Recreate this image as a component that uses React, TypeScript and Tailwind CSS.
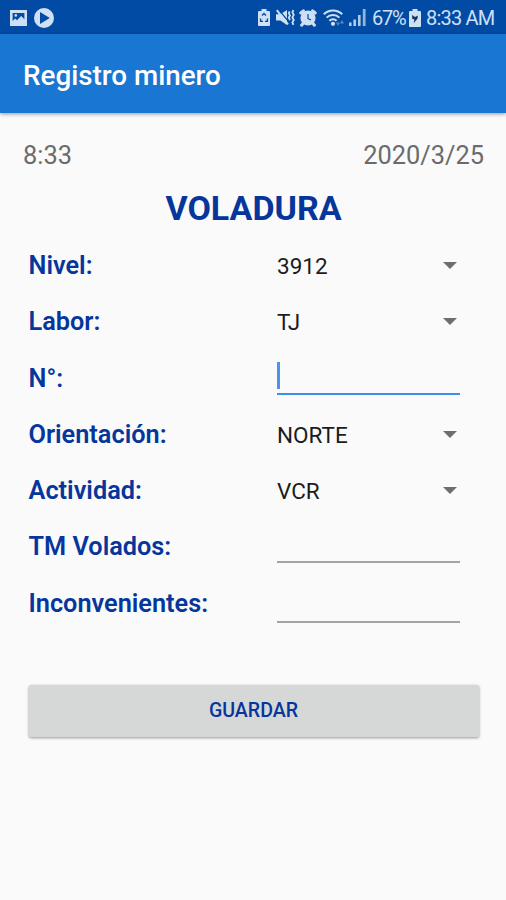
import type { ReactNode } from "react";

function ImageIcon() {
    return (
        <svg width="17" height="16" viewBox="0 0 17 16" className="shrink-0">
            <path
                fill="currentColor"
                fillRule="evenodd"
                d="M0 0h17v16H0zM2.6 3v8l2.6-2.6 1.8 1.8L11.2 6l3.2 3.2V3z"
            />
            <circle cx="5.8" cy="5.4" r="1.3" fill="currentColor" />
        </svg>
    );
}

function PlayIcon() {
    return (
        <svg width="20" height="20" viewBox="0 0 20 20" className="shrink-0">
            <path
                fill="currentColor"
                fillRule="evenodd"
                d="M10 0a10 10 0 1 1 0 20 10 10 0 0 1 0-20zM6 4v12l9.8-6z"
            />
        </svg>
    );
}

function BatterySaverIcon() {
    return (
        <svg width="12" height="17" viewBox="0 0 12 17" className="shrink-0">
            <path fill="currentColor" d="M3.5 0h5v2H11a1 1 0 0 1 1 1v13a1 1 0 0 1-1 1H1a1 1 0 0 1-1-1V3a1 1 0 0 1 1-1h2.5z" />
            <path fill="none" stroke="#024ba4" strokeWidth="1.4" d="M4 6.6 6 4.6l2 2M2.6 9.6v2.8h2.4M9.4 9.6v2.8H7" />
        </svg>
    );
}

function MuteVibrateIcon() {
    return (
        <svg width="19" height="17" viewBox="0 0 19 17" className="shrink-0">
            <path fill="currentColor" d="M0 5.2h4.4L11 1v15l-6.6-4.6H0z" />
            <path stroke="#024ba4" strokeWidth="1.2" d="M2.6.6 13 13" />
            <path stroke="currentColor" strokeWidth="2" d="M.8 1.2 12 15.4" />
            <path fill="none" stroke="currentColor" strokeWidth="1.8" d="m13.6 2.4-.8 2 1.2 2-1.2 2.2 1.2 2.4M17.4 1l-1 2.4 1.4 2.4-1.4 2.6 1.4 2.6-1.4 2.4 1 2.4" />
        </svg>
    );
}

function AlarmIcon() {
    return (
        <svg width="18" height="18" viewBox="0 0 18 18" className="shrink-0">
            <circle cx="9" cy="9" r="7.6" fill="currentColor" />
            <path
                fill="none"
                stroke="currentColor"
                strokeWidth="3"
                strokeLinecap="round"
                d="M1.8 4 4.4 1.8M16.2 4l-2.6-2.2M4 14.6l-1.4 1.6M14 14.6l1.4 1.6"
            />
            <path fill="none" stroke="#024ba4" strokeWidth="1.2" d="M9 5v4.6l3 1.4" />
        </svg>
    );
}

function WifiIcon() {
    return (
        <svg width="22" height="18" viewBox="0 0 22 18" className="shrink-0">
            <g fill="none" stroke="currentColor" strokeWidth="2">
                <path d="M.8 5.2a13 13 0 0 1 18.4 0" />
                <path d="M3.6 8.6a9 9 0 0 1 12.8 0" />
                <path d="M6.4 11.8a5.2 5.2 0 0 1 7.2 0" />
            </g>
            <circle cx="10" cy="14.8" r="2.1" fill="currentColor" />
            <path fill="currentColor" opacity=".4" d="M13 13.4h4l-2 3.6zM17 14.6h4l-2-3.6z" />
        </svg>
    );
}

function SignalIcon() {
    return (
        <svg width="17" height="17" viewBox="0 0 17 17" className="shrink-0">
            <path fill="currentColor" opacity=".85" d="M0 13.6h2.6V17H0zM4.4 10.6H7V17H4.4zM9 6h2.6v11H9z" />
            <path fill="currentColor" opacity=".7" d="M13.8 0h2.8v17h-2.8z" />
        </svg>
    );
}

function ChargingIcon() {
    return (
        <svg width="12" height="18" viewBox="0 0 12 18" className="shrink-0">
            <path fill="currentColor" d="M3.5 0h5v2H11a1 1 0 0 1 1 1v14a1 1 0 0 1-1 1H1a1 1 0 0 1-1-1V3a1 1 0 0 1 1-1h2.5z" />
            <path fill="#16345f" d="M3.2 6 6 8l3-1.6-.6 3.4-3.8 4.4.8-3.6-2.2-.8z" />
        </svg>
    );
}

function StatusBar() {
    return (
        <div className="flex h-[34px] items-center bg-[#024ba4] pt-px pl-2.5 pr-[12px] text-[#cfe0f5]">
            <ImageIcon />
            <span className="ml-[7px] flex">
                <PlayIcon />
            </span>
            <div className="ml-auto flex items-center">
                <BatterySaverIcon />
                <span className="ml-1.5 flex">
                    <MuteVibrateIcon />
                </span>
                <span className="ml-1 flex">
                    <AlarmIcon />
                </span>
                <span className="ml-1.5 flex">
                    <WifiIcon />
                </span>
                <span className="ml-1 flex">
                    <SignalIcon />
                </span>
                <span className="ml-1.5 w-[34px] pt-px text-[20px] leading-none tracking-[-1.2px]">67%</span>
                <span className="ml-[3px] flex">
                    <ChargingIcon />
                </span>
                <span className="ml-[5px] w-[68px] pt-px text-[20px] leading-none tracking-[-0.8px] whitespace-nowrap">
                    8:33 AM
                </span>
            </div>
        </div>
    );
}

function Row({ label, children }: { label: string; children: ReactNode }) {
    return (
        <div className="flex h-[56.25px]">
            <div className="flex w-[248.5px] items-center pt-0.5 text-[25.3px] font-semibold text-[#06369c]">{label}</div>
            <div className="w-[183px]">{children}</div>
        </div>
    );
}

function Spinner({ value }: { value: string }) {
    return (
        <div className="flex h-full items-center justify-between pt-[3px] pr-[3px] text-[22.5px] text-[#1c1c1c]">
            <span>{value}</span>
            <svg width="14" height="7" viewBox="0 0 14 7" className="mb-0.5">
                <path d="M0 0h14L7 7z" fill="#6e6e6e" />
            </svg>
        </div>
    );
}

export default function App() {
    return (
        <div className="flex h-[900px] w-[506px] flex-col overflow-hidden bg-[#fafafa] font-['Roboto',sans-serif]">
            <StatusBar />
            <header className="flex h-[79px] items-center bg-[#1976d2] pt-1 pl-[23px] shadow-[0_1px_4px_rgba(0,0,0,0.4)]">
                <h1 className="text-[27.8px] font-medium text-white">Registro minero</h1>
            </header>

            <div className="flex h-[82px] items-center justify-between pt-0.5 pr-[22px] pl-[23px] text-[25.4px] text-[#6b6b6b]">
                <span>8:33</span>
                <span>2020/3/25</span>
            </div>

            <h2 className="-mt-1 mb-1 h-[42px] pl-px text-center text-[34px] leading-[34px] font-bold text-[#06369c]">
                VOLADURA
            </h2>

            <div className="pl-[28.5px]">
                <Row label="Nivel:">
                    <Spinner value="3912" />
                </Row>
                <Row label="Labor:">
                    <Spinner value="TJ" />
                </Row>
                <Row label="N°:">
                    <div className="flex h-[45px] items-end border-b-2 border-[#3b8eea] pb-1">
                        <span className="h-[27px] w-[2.5px] bg-[#4a94ee]" />
                    </div>
                </Row>
                <Row label="Orientación:">
                    <Spinner value="NORTE" />
                </Row>
                <Row label="Actividad:">
                    <Spinner value="VCR" />
                </Row>
                <Row label="TM Volados:">
                    <div className="h-[45px] border-b-2 border-[#a3a3a3]" />
                </Row>
                <Row label="Inconvenientes:">
                    <div className="h-12 border-b-2 border-[#a3a3a3]" />
                </Row>
            </div>

            <button className="mt-[54px] ml-[28.5px] h-[52px] w-[450px] shrink-0 rounded-[2px] bg-[#d6d7d7] text-[19.6px] font-medium text-[#06369c] shadow-[0_1px_3px_rgba(0,0,0,0.4)]">
                GUARDAR
            </button>
        </div>
    );
}
